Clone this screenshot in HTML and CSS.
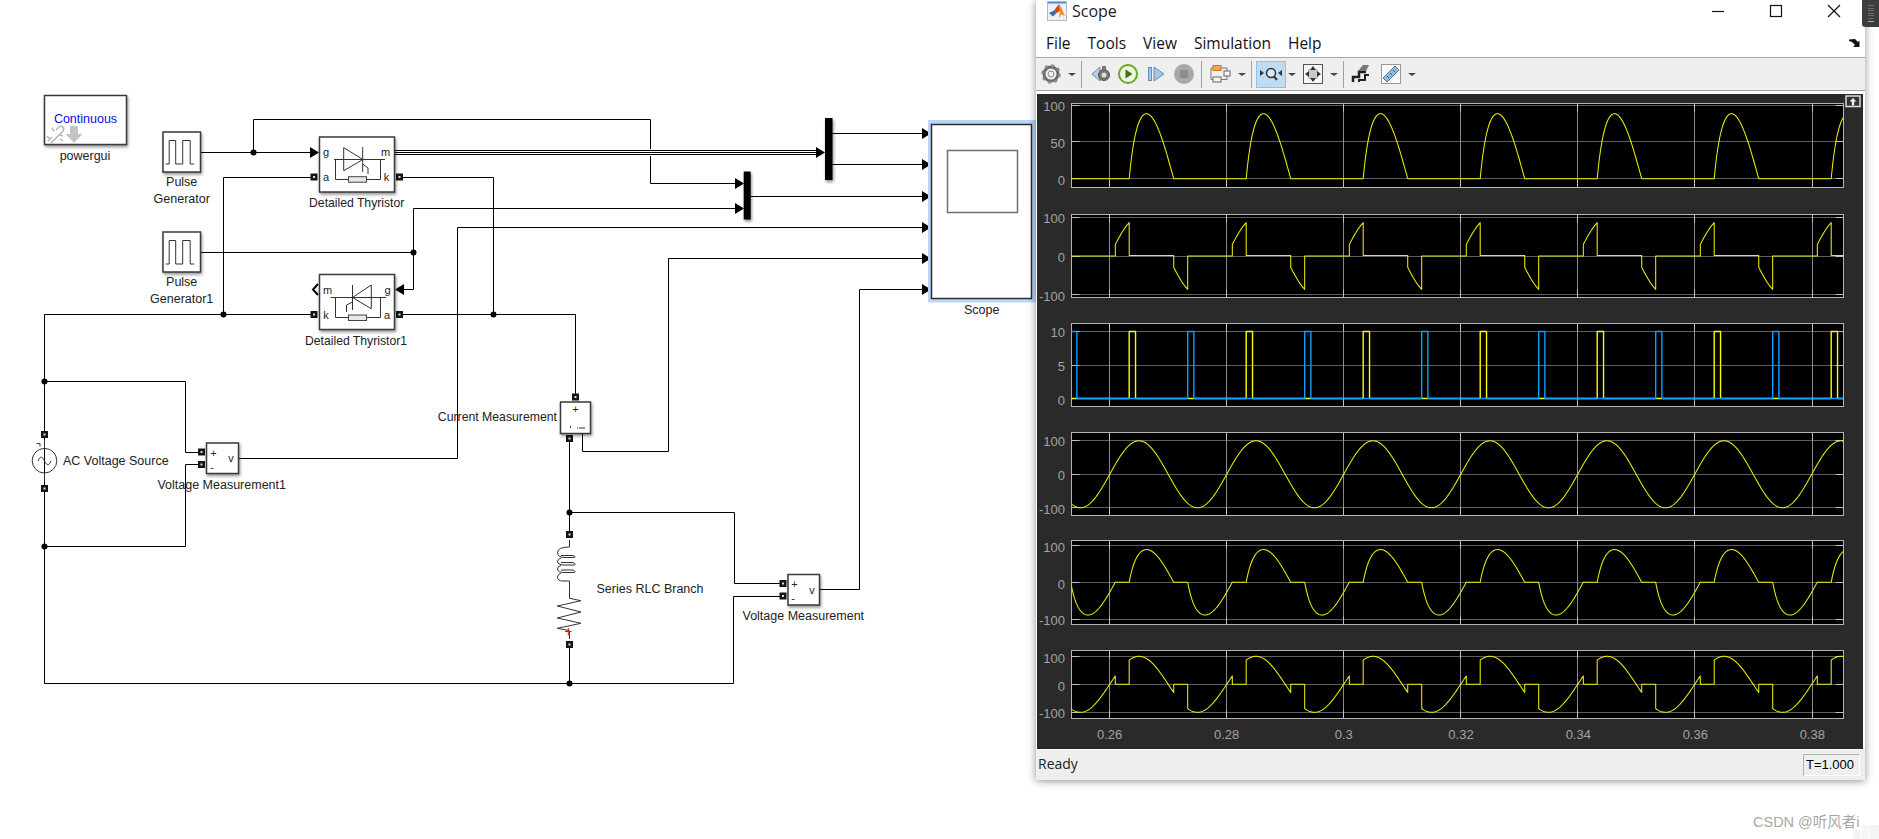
FILE: index.html
```html
<!DOCTYPE html>
<html lang="en">
<head>
<meta charset="utf-8">
<title>Scope</title>
<link rel="stylesheet" href="styles.css">
</head>
<body>
<div class="desktop">

<svg class="diagram" width="1879" height="839" viewBox="0 0 1879 839">
  <defs>
    <path id="arrow-r" d="M-9 -5.5L0 0L-9 5.5z"/>
    <path id="arrow-l" d="M9 -5.5L0 0L9 5.5z"/>
    <g id="port"><rect x="-3.5" y="-3.5" width="7" height="7" fill="#151515"/><rect x="-1" y="-1" width="2" height="2" fill="#ddd"/></g>
    <path id="pulse" d="M-16 16H-12.5V-7.5H-6V16H1V-7.5H8.5V16H12.5"/>
  </defs>

  <!-- wires -->
  <g class="wire">
    <path d="M201 152.5H311"/>
    <path d="M253.5 152.5V119.5H650.5V149M650.5 156V183.5H736"/>
    <path d="M311 177.5H223.5V314.5"/>
    <path d="M44.5 683.5V314.5H311"/>
    <path d="M403 177.5H493.5V314.5"/>
    <path d="M403 314.5H575.5V394"/>
    <path d="M201 252.5H413.5V208.5H736"/>
    <path d="M413.5 252.5V289.5H403"/>
    <path d="M239 458.5H457.5V227.5H923"/>
    <path d="M582.5 433V451.5H668.5V258.5H923"/>
    <path d="M819 589.5H859.5V289.5H923"/>
    <path d="M569.5 441V531"/>
    <path d="M569.5 647V683.5"/>
    <path d="M569.5 512.5H734.5V583.5H780"/>
    <path d="M44.5 683.5H733.5V596.5H780"/>
    <path d="M198 452.5H185.5V381.5H44.5"/>
    <path d="M198 464.5H185.5V546.5H44.5"/>
    <path d="M832 133.5H923"/>
    <path d="M832 164.5H923"/>
    <path d="M751 196.5H923"/>
    <path d="M394.5 150.5H817M394.5 152.5H817M394.5 154.5H817"/>
  </g>

  <!-- junctions -->
  <g class="dot">
    <circle cx="253.5" cy="152.5" r="3"/>
    <circle cx="413.5" cy="252.5" r="3"/>
    <circle cx="223.5" cy="314.5" r="3"/>
    <circle cx="493.5" cy="314.5" r="3"/>
    <circle cx="44.5" cy="381.5" r="3"/>
    <circle cx="44.5" cy="546.5" r="3"/>
    <circle cx="569.5" cy="512.5" r="3"/>
    <circle cx="569.5" cy="683.5" r="3"/>
  </g>

  <!-- arrow heads -->
  <g>
    <use href="#arrow-r" x="319" y="152.5"/>
    <use href="#arrow-l" x="395" y="289.5"/>
    <use href="#arrow-r" x="825" y="152.5"/>
    <use href="#arrow-r" x="744" y="183.5"/>
    <use href="#arrow-r" x="744" y="208.5"/>
    <use href="#arrow-r" x="931" y="133.5"/>
    <use href="#arrow-r" x="931" y="164.5"/>
    <use href="#arrow-r" x="931" y="196.5"/>
    <use href="#arrow-r" x="931" y="227.5"/>
    <use href="#arrow-r" x="931" y="258.5"/>
    <use href="#arrow-r" x="931" y="289.5"/>
  </g>

  <!-- ports -->
  <g>
    <use href="#port" x="314" y="177"/>
    <use href="#port" x="399.5" y="177"/>
    <use href="#port" x="314" y="314.5"/>
    <use href="#port" x="399.5" y="314.5"/>
    <use href="#port" x="44.5" y="434.5"/>
    <use href="#port" x="44.5" y="488.5"/>
    <use href="#port" x="201.5" y="452"/>
    <use href="#port" x="201.5" y="464.5"/>
    <use href="#port" x="575.5" y="397"/>
    <use href="#port" x="569.5" y="438.5"/>
    <use href="#port" x="569.5" y="534.5"/>
    <use href="#port" x="569.5" y="644.5"/>
    <use href="#port" x="783" y="583.5"/>
    <use href="#port" x="783" y="596"/>
  </g>

  <!-- powergui -->
  <rect class="block" x="44.5" y="95.5" width="82" height="49"/>
  <text class="lbl-blue" x="85.5" y="118.5">Continuous</text>
  <g class="link-icon">
    <path d="M48 141l4-4M51 143l12-12c2-3-1-6-4-4l-3 3M47 136l3 3M52 128l2 3M60 139l3 2M63 136l-3-1"/>
  </g>
  <path class="grey-arrow" d="M70 126h8v8h4.500l-8.500 9-8.500-9h4.500z"/>
  <text class="lbl" x="85" y="156">powergui</text>

  <!-- pulse generators -->
  <rect class="block" x="163" y="132" width="37.500" height="40"/>
  <use class="sym" href="#pulse" x="181.700" y="148"/>
  <text class="lbl" x="181.700" y="182">Pulse</text>
  <text class="lbl" x="181.700" y="199">Generator</text>
  <rect class="block" x="163" y="232" width="37.500" height="40"/>
  <use class="sym" href="#pulse" x="181.700" y="248"/>
  <text class="lbl" x="181.700" y="282">Pulse</text>
  <text class="lbl" x="181.700" y="299">Generator1</text>

  <!-- detailed thyristor -->
  <rect class="block" x="319.500" y="137" width="75" height="55"/>
  <path class="sym" d="M334 159.500H385M335.500 159.500V179.500H348.500M366.500 179.500H380.500V159.500M343.700 147.700V170.700L363 159.500zM362.700 147V172M362.700 164L368 168V174"/>
  <rect class="resistor" x="348.500" y="176.700" width="18" height="5.500"/>
  <text class="lbl-s" x="326" y="152">g</text>
  <text class="lbl-s" x="385.500" y="151.500">m</text>
  <text class="lbl-s" x="326" y="176.500">a</text>
  <text class="lbl-s" x="386.500" y="176.500">k</text>
  <text class="lbl lbl-d" x="356.700" y="203">Detailed Thyristor</text>

  <!-- detailed thyristor 1 -->
  <rect class="block" x="319.500" y="274.500" width="75" height="55"/>
  <path class="sym" d="M330.700 297.500H386M335.500 297.500V317.500H348.500M366.500 317.500H380.500V297.500M371.300 285V308.700L352.500 297.500zM352.500 285V310M352.500 302L346.500 305V312"/>
  <rect class="resistor" x="348.500" y="315" width="18" height="5.500"/>
  <path class="m-port" d="M318 284L313 289.500L318 295"/>
  <text class="lbl-s" x="327.500" y="289.500">m</text>
  <text class="lbl-s" x="387.500" y="290">g</text>
  <text class="lbl-s" x="326" y="314.500">k</text>
  <text class="lbl-s" x="387" y="314.500">a</text>
  <text class="lbl lbl-d" x="356" y="341">Detailed Thyristor1</text>

  <!-- AC source -->
  <path class="sym" d="M44.500 440V448.500M44.500 473V482"/>
  <circle class="sym" cx="44.500" cy="460.700" r="12.300"/>
  <path class="sym" d="M38 461c2-5 4-5 6.500 0s4.500 5 6.500 0"/>
  <path class="sym" d="M36.500 443.500h3.500v3"/>
  <text class="lbl-l" x="63" y="460.500">AC Voltage Source</text>

  <!-- voltage measurement 1 -->
  <rect class="block-sm" x="206.500" y="443" width="32" height="30.500"/>
  <text class="lbl-s" x="213.500" y="452.500">+</text>
  <text class="lbl-s" x="212" y="466.500">-</text>
  <text class="lbl-s" x="231" y="458">v</text>
  <text class="lbl" x="221.700" y="484.700">Voltage Measurement1</text>

  <!-- current measurement -->
  <rect class="block-sm" x="560.500" y="402" width="30" height="31.500"/>
  <text class="lbl-s" x="575.500" y="409">+</text>
  <path class="sym" d="M570.500 426v2M577 428h1M579 428h6"/>
  <text class="lbl-r" x="557" y="416.500">Current Measurement</text>

  <!-- series RLC -->
  <path class="sym" d="M569.500 540V547Q557.500 547 557.500 552.500Q557.500 557.500 565 557.500H573Q577.500 557.500 573 555.500H561M561 558Q557.500 559 557.500 561.500Q557.500 565 565 565H573Q577.500 565 573 562.500H561M561 565.500Q557.500 566.500 557.500 569Q557.500 572.500 565 572.500H573Q577.500 572.500 573 570H561M561 573Q557.500 574 557.500 577Q557.500 581 563 581H569.500V598.300L581 600.700L557.300 606L581 612L557.300 618L581 623.300L557.300 628.300L569.500 630.700V639"/>
  <path class="red" d="M565 631.500h6.500M568.300 628v7.500"/>
  <text class="lbl" x="650" y="588.500">Series RLC Branch</text>

  <!-- voltage measurement -->
  <rect class="block-sm" x="788" y="574.500" width="31.500" height="30.500"/>
  <text class="lbl-s" x="794.500" y="583.500">+</text>
  <text class="lbl-s" x="793" y="597.500">-</text>
  <text class="lbl-s" x="812" y="589.500">v</text>
  <text class="lbl" x="803.300" y="615.500">Voltage Measurement</text>

  <!-- mux bars -->
  <rect class="bar" x="825" y="118" width="7.500" height="62"/>
  <rect class="bar" x="743.700" y="171.500" width="7" height="48"/>

  <!-- scope block -->
  <rect class="selection" x="930" y="122" width="104" height="178.500"/>
  <rect class="scope-block" x="931.500" y="124.500" width="100" height="174"/>
  <rect class="scope-screen" x="947.500" y="150.500" width="70" height="62"/>
  <text class="lbl" x="981.700" y="309.500">Scope</text>

  <!-- faint corner artefacts -->
  <rect class="faint" x="1853" y="830" width="8" height="9"/>
  <rect class="faint" x="1862" y="825" width="6" height="14"/>
  <rect class="faint" x="1869" y="825" width="10" height="14"/>
</svg>

<section class="scope-window">
  <header class="titlebar">
    <svg class="app-icon" width="20" height="20" viewBox="0 0 20 20">
      <rect x=".5" y=".5" width="19" height="19" fill="#eef0f3" stroke="#b5b9bd"/>
      <rect x="1" y="1" width="18" height="1.500" fill="#3f8fdc"/>
      <path d="M2 12L7 9.500L9.500 12L6 15.500z" fill="#2f6cae"/>
      <path d="M7 9.500L12 3L13 10L9.500 12z" fill="#c9471c"/>
      <path d="M12 3C14 5 16 11 18 15L14.500 13.500L12 17L13 10z" fill="#ef8a28"/>
    </svg>
    <span class="title-text">Scope</span>
    <div class="window-controls">
      <span class="wc"><svg width="14" height="14" viewBox="0 0 14 14"><path class="wc-line" d="M1 7.500H13"/></svg></span>
      <span class="wc"><svg width="14" height="14" viewBox="0 0 14 14"><rect class="wc-line" x="1.500" y="1.500" width="11" height="11"/></svg></span>
      <span class="wc"><svg width="14" height="14" viewBox="0 0 14 14"><path class="wc-line" d="M1 1L13 13M13 1L1 13"/></svg></span>
    </div>
  </header>

  <nav class="menubar">
    <span class="menu-item">File</span>
    <span class="menu-item">Tools</span>
    <span class="menu-item">View</span>
    <span class="menu-item">Simulation</span>
    <span class="menu-item">Help</span>
    <svg class="undock-menu" width="12" height="10" viewBox="0 0 12 10"><path d="M1 1.500L7 1L10 4L11.500 2.500V9H5L7 7L4 4L1 3z" fill="#111"/></svg>
  </nav>

  <div class="toolbar">
    <svg class="ti m5" width="20" height="20" viewBox="0 0 20 20">
      <circle cx="10" cy="10" r="7" fill="none" stroke="#6b6b6b" stroke-width="3"/>
      <circle cx="10" cy="10" r="8.500" fill="none" stroke="#8a8a8a" stroke-width="2.500" stroke-dasharray="3 3.670"/>
      <circle cx="10" cy="10" r="3" fill="#efefef" stroke="#8a8a8a"/>
    </svg>
    <span class="dd m7"></span>
    <span class="sep m5"></span>
    <svg class="ti m9" width="20" height="20" viewBox="0 0 20 20">
      <path d="M1 10L9 3V17z" fill="#b9cfe3" stroke="#6c8cab"/>
      <circle cx="13" cy="11" r="5.500" fill="#777" stroke="#555"/>
      <circle cx="13" cy="11" r="2.500" fill="#ddd"/>
      <rect x="11" y="2" width="4" height="3.500" fill="#777"/>
    </svg>
    <svg class="ti m7" width="20" height="20" viewBox="0 0 20 20">
      <circle cx="10" cy="10" r="9" fill="#eef5dc" stroke="#6aa82e" stroke-width="2"/>
      <path d="M7.500 5.500L14.500 10L7.500 14.500z" fill="#3f6f1c"/>
    </svg>
    <svg class="ti m8" width="20" height="20" viewBox="0 0 20 20">
      <rect x="2.500" y="3.500" width="3" height="13" fill="#a9c6e6" stroke="#5f8ebd"/>
      <path d="M8 3L18 10L8 17z" fill="#a9c6e6" stroke="#5f8ebd"/>
    </svg>
    <svg class="ti m8" width="20" height="20" viewBox="0 0 20 20">
      <circle cx="10" cy="10" r="10" fill="#a8a8a8"/>
      <rect x="6" y="6" width="8" height="8" fill="#8c8c8c"/>
    </svg>
    <span class="sep m7"></span>
    <svg class="ti m8" width="22" height="20" viewBox="0 0 22 20">
      <rect x="3" y="1.500" width="8" height="5" fill="#f2a94a" stroke="#c77a1d"/>
      <rect x="3" y="13" width="8" height="5" fill="#f5f5f5" stroke="#666"/>
      <rect x="14" y="7" width="6" height="5" fill="#f5f5f5" stroke="#666"/>
      <path d="M11 4H17V7M11 15.500H17V12M1 4H3M1 4V15.500H3" fill="none" stroke="#777"/>
    </svg>
    <span class="dd m6"></span>
    <span class="sep m5"></span>
    <span class="tb-active m4">
      <svg width="24" height="20" viewBox="0 0 24 20">
        <circle cx="12" cy="9" r="4.500" fill="#dbe9f5" stroke="#333" stroke-width="1.500"/>
        <path d="M15 12.500L18 16" stroke="#333" stroke-width="2"/>
        <path d="M5 9L1 6V12zM19 9L23 6V12z" fill="#333"/>
      </svg>
    </span>
    <span class="dd m2"></span>
    <svg class="ti m7" width="20" height="20" viewBox="0 0 20 20">
      <rect x=".5" y=".5" width="19" height="19" fill="#f8f8f8" stroke="#555"/>
      <rect x="5" y="5" width="10" height="10" fill="#c8c8c8"/>
      <path d="M10 2L13 6H7zM10 18L13 14H7zM2 10L6 7V13zM18 10L14 7V13z" fill="#333"/>
    </svg>
    <span class="dd m7"></span>
    <span class="sep m5"></span>
    <svg class="ti m7" width="20" height="20" viewBox="0 0 20 20">
      <path d="M2 18V13H8V8H15" fill="none" stroke="#222" stroke-width="2.500"/>
      <path d="M8 18V16H14V11H18" fill="none" stroke="#222" stroke-width="2"/>
      <path d="M7 7L12 1H18L15 7z" fill="#777"/>
    </svg>
    <svg class="ti m10" width="20" height="20" viewBox="0 0 20 20">
      <rect x=".5" y=".5" width="19" height="19" fill="#fbfbfb" stroke="#999"/>
      <path d="M2 14L14 2L18 6L6 18z" fill="#8dbbe0" stroke="#4b7da6"/>
      <path d="M6 12l2 2M9 9l2 2M12 6l2 2" stroke="#35607f"/>
    </svg>
    <span class="dd m7"></span>
  </div>

  <main class="plot-panel">
    <svg id="plots" class="plots" width="826" height="655" viewBox="1037 94 826 655">
      <g class="tk">
        <text x="1065" y="106">100</text><text x="1065" y="143">50</text><text x="1065" y="180">0</text>
        <text x="1065" y="218">100</text><text x="1065" y="257">0</text><text x="1065" y="296.500">-100</text>
        <text x="1065" y="332.500">10</text><text x="1065" y="366.500">5</text><text x="1065" y="400.500">0</text>
        <text x="1065" y="441.500">100</text><text x="1065" y="475.500">0</text><text x="1065" y="509.500">-100</text>
        <text x="1065" y="547.500">100</text><text x="1065" y="584.500">0</text><text x="1065" y="620">-100</text>
        <text x="1065" y="658.500">100</text><text x="1065" y="686.500">0</text><text x="1065" y="713.500">-100</text>
      </g>
      <g class="tx">
        <text x="1109.700" y="734.500">0.26</text>
        <text x="1226.700" y="734.500">0.28</text>
        <text x="1343.700" y="734.500">0.3</text>
        <text x="1461" y="734.500">0.32</text>
        <text x="1578.300" y="734.500">0.34</text>
        <text x="1695.300" y="734.500">0.36</text>
        <text x="1812.300" y="734.500">0.38</text>
      </g>
      <rect class="undock" x="1846" y="96" width="14" height="10.500"/>
      <path class="undock-mark" d="M1853 98L1856.500 101.500H1854.200V105.500H1851.800V101.500H1849.500z"/>
    </svg>
  </main>

  <footer class="statusbar">
    <span class="status-text">Ready</span>
    <span class="status-time">T=1.000</span>
  </footer>
</section>

<div class="gadget" aria-hidden="true">
  <span class="g-line"></span><span class="g-line"></span><span class="g-line"></span><span class="g-line"></span><span class="g-line"></span><span class="g-line"></span>
  <span class="g-line g-on"></span>
</div>

<div class="watermark">CSDN @听风者i</div>
</div>
<script src="plots.js"></script>
</body>
</html>
```

FILE: styles.css
```css
html, body {
  margin: 0;
  padding: 0;
  background: #fff;
}
.desktop {
  position: relative;
  width: 1879px;
  height: 839px;
  overflow: hidden;
  background: #fff;
}
.diagram {
  position: absolute;
  left: 0;
  top: 0;
}
.diagram text {
  font-family: "Liberation Sans", Arial, sans-serif;
  dominant-baseline: central;
}
.wire path {
  fill: none;
  stroke: #000;
  stroke-width: 1;
}
.dot circle { fill: #000; }
.block, .block-sm {
  fill: #fff;
  stroke: #3a3a3a;
  stroke-width: 1.5;
  filter: drop-shadow(1.5px 2px 1.5px rgba(0,0,0,.4));
}
.sym {
  fill: none;
  stroke: #333;
  stroke-width: 1;
}
.resistor {
  fill: #e8e8e8;
  stroke: #444;
  stroke-width: 1;
}
.m-port {
  fill: none;
  stroke: #000;
  stroke-width: 2;
}
.link-icon path {
  fill: none;
  stroke: #b5b5b5;
  stroke-width: 1.500;
}
.grey-arrow { fill: #c4c4c4; }
.red {
  fill: none;
  stroke: #ee1111;
  stroke-width: 1;
}
.lbl, .lbl-s, .lbl-l, .lbl-r, .lbl-blue {
  font-size: 12.500px;
  fill: #222;
  text-anchor: middle;
}
.lbl-d { font-size: 12.200px; }
.lbl-s { font-size: 11px; }
.lbl-l { text-anchor: start; }
.lbl-r { text-anchor: end; font-size: 12.250px; }
.lbl-blue { fill: #0a0ae6; }
.bar {
  fill: #000;
  filter: drop-shadow(1.5px 2px 1.5px rgba(0,0,0,.45));
}
.selection {
  fill: none;
  stroke: #bcd7f6;
  stroke-width: 4;
}
.scope-block {
  fill: #fff;
  stroke: #2c2c2c;
  stroke-width: 1.5;
}
.scope-screen {
  fill: #fff;
  stroke: #707070;
  stroke-width: 1.5;
}
.faint { fill: #f5f5f5; }

/* scope window */
.scope-window {
  position: absolute;
  left: 1036px;
  top: 0;
  width: 829px;
  height: 780px;
  display: flex;
  flex-direction: column;
  background: #fff;
  box-shadow: 0 1px 8px rgba(0,0,0,.45);
  font-family: "Open Sans", "Noto Sans", sans-serif;
  color: #111;
}
.titlebar {
  height: 22px;
  flex: none;
  display: flex;
  align-items: center;
  padding-left: 11px;
}
.app-icon { flex: none; }
.title-text {
  margin-left: 5px;
  font-size: 16px;
  line-height: 22px;
  color: #222;
}
.window-controls {
  margin-left: auto;
  margin-right: 2px;
  display: flex;
}
.wc {
  width: 58px;
  height: 22px;
  display: flex;
  align-items: center;
  justify-content: center;
}
.wc-line {
  fill: none;
  stroke: #111;
  stroke-width: 1.200;
}
.menubar {
  height: 36px;
  flex: none;
  box-sizing: border-box;
  padding: 6px 5px 0 10px;
  display: flex;
  align-items: center;
  gap: 17px;
  border-bottom: 1px solid #a6a6a6;
  font-size: 15.500px;
}
.menu-item { line-height: 20px; }
.undock-menu { margin-left: auto; }
.toolbar {
  height: 33px;
  flex: none;
  box-sizing: border-box;
  display: flex;
  align-items: center;
  background: #efefef;
  border-bottom: 1px solid #a6a6a6;
}
.ti { flex: none; }
.dd {
  flex: none;
  width: 0;
  height: 0;
  border-left: 4px solid transparent;
  border-right: 4px solid transparent;
  border-top: 3px solid #444;
}
.sep {
  flex: none;
  width: 1px;
  height: 27px;
  background: #a0a0a0;
}
.tb-active {
  flex: none;
  width: 30px;
  height: 27px;
  box-sizing: border-box;
  display: flex;
  align-items: center;
  justify-content: center;
  background: #bfdcf5;
  border: 1px solid #8cc3ee;
}
.m2 { margin-left: 2px; }
.m4 { margin-left: 4px; }
.m5 { margin-left: 5px; }
.m6 { margin-left: 6px; }
.m7 { margin-left: 7px; }
.m8 { margin-left: 8px; }
.m9 { margin-left: 9px; }
.m10 { margin-left: 10px; }
.plot-panel {
  height: 655px;
  flex: none;
  margin: 3px 2px 1px 1px;
  background: #2a2a2a;
}
.plots {
  display: block;
}
.plots text {
  font-family: "Liberation Sans", Arial, sans-serif;
  font-size: 13px;
  fill: #a3a3a3;
  dominant-baseline: central;
}
.tk text { text-anchor: end; }
.tx text { text-anchor: middle; }
.ax-bg { fill: #000; }
.ax-frame { fill: none; stroke: #b4b4b4; stroke-width: 1; }
.ax-hgrid { stroke: #5e5e5e; stroke-width: 1; }
.ax-vgrid { stroke: #8a8a8a; stroke-width: 1; }
.ax-tick { stroke: #c0c0c0; stroke-width: 1; }
.trace { fill: none; stroke-width: 1.050; stroke-linejoin: round; }
.trace-y { stroke: #eeee00; }
.trace-p { stroke-width: 1.400; stroke: #ffff00; }
.trace-b { stroke: #0aa0ff; stroke-width: 1.400; }
.undock { fill: #333; stroke: #dcdcdc; stroke-width: 1.500; }
.undock-mark { fill: #eee; }
.statusbar {
  flex: 1;
  display: flex;
  align-items: center;
  justify-content: space-between;
  padding: 0 5px 0 2px;
  background: #eee;
  font-family: "Liberation Sans", Arial, sans-serif;
  font-size: 13px;
}
.status-text {
  font-family: "Open Sans", "Noto Sans", sans-serif;
  font-size: 14px;
  line-height: 18px;
  margin-bottom: 2px;
  color: #222;
}
.status-time {
  box-sizing: border-box;
  width: 57px;
  height: 22px;
  padding-left: 2px;
  line-height: 20px;
  color: #000;
  border-style: solid;
  border-width: 1px;
  border-color: #b0b0b0 #fff #fff #b0b0b0;
}

/* corner gadget */
.gadget {
  position: absolute;
  left: 1862px;
  top: 0;
  width: 17px;
  height: 27px;
  box-sizing: border-box;
  padding: 5px 5px 0 6px;
  display: flex;
  flex-direction: column;
  gap: 1.500px;
  background: #3b3e3b;
  border-bottom-left-radius: 3px;
}
.g-line {
  display: block;
  height: 1px;
  background: #6d6d6d;
}
.g-on { background: #8fd13f; margin-top: 1px; }

.watermark {
  position: absolute;
  left: 1753px;
  top: 812px;
  font-family: "Liberation Sans", "Noto Sans CJK SC", sans-serif;
  font-size: 14.500px;
  line-height: 20px;
  color: #a8a8a8;
  white-space: nowrap;
}
```

FILE: plots.js
```js
// Draws the six scope axes. Traces are computed from the circuit's waveforms:
// a 50 Hz, 100 V source with two antiparallel thyristors fired at 60 degrees into an RL load.
(function () {
  var NS = 'http://www.w3.org/2000/svg';
  var svg = document.getElementById('plots');
  var LEFT = 1071.5, RIGHT = 1843.5;
  var X0 = 1109.7, PERIOD = 117;
  var RAD = Math.PI / 180;

  function sin100(t) { return 100 * Math.sin(t * RAD); }
  function zero() { return 0; }
  function k(v) { return function () { return v; }; }
  function cur(t) {
    var phi = 17, alpha = 60;
    return 92 * (Math.sin((t - phi) * RAD) -
      Math.sin((alpha - phi) * RAD) * Math.exp(-(t - alpha) * RAD / Math.tan(phi * RAD)));
  }
  function curNeg(t) { return -cur(t - 180); }

  var axes = [
    { top: 103.5, bottom: 187.5, y0: 178.7, s: 0.735, ticks: [100, 50, 0],
      traces: [{ c: 'trace-y', segs: [[0, 60, zero], [60, 197, cur], [197, 360, zero]] }] },
    { top: 214.5, bottom: 297.5, y0: 256, s: 0.385, ticks: [100, 0, -100],
      traces: [{ c: 'trace-y', segs: [[0, 17.3, zero], [17.3, 60, sin100], [60, 197, k(1.5)], [197, 240, sin100], [240, 360, zero]] }] },
    { top: 323.5, bottom: 406.5, y0: 398.5, s: 6.7, ticks: [10, 5, 0],
      traces: [
        { c: 'trace-y trace-p', segs: [[0, 60, zero], [60, 79.5, k(10)], [79.5, 360, zero]] },
        { c: 'trace-b', segs: [[0, 240, zero], [240, 259, k(10)], [259, 360, zero]] }
      ] },
    { top: 432.5, bottom: 515.5, y0: 474.3, s: 0.335, ticks: [100, 0, -100],
      traces: [{ c: 'trace-y', segs: [[0, 360, sin100]] }] },
    { top: 540.5, bottom: 624.5, y0: 582.3, s: 0.37, ticks: [100, 0, -100],
      traces: [{ c: 'trace-y', segs: [[17.3, 60, zero], [60, 197, cur], [197, 240, zero], [240, 377.3, curNeg]] }] },
    { top: 650.5, bottom: 718.5, y0: 684.3, s: 0.28, ticks: [100, 0, -100],
      traces: [{ c: 'trace-y', segs: [[17.3, 60, zero], [60, 197, sin100], [197, 240, zero], [240, 377.3, sin100]] }] }
  ];

  var gridX = [];
  for (var g = 0; g < 7; g++) gridX.push(Math.floor(X0 + 117.05 * g) + 0.5);

  function el(parent, name, attrs) {
    var e = document.createElementNS(NS, name);
    for (var a in attrs) e.setAttribute(a, attrs[a]);
    parent.appendChild(e);
    return e;
  }
  function line(parent, cls, x1, y1, x2, y2) {
    return el(parent, 'line', { 'class': cls, x1: x1, y1: y1, x2: x2, y2: y2 });
  }

  axes.forEach(function (ax) {
    var h = ax.bottom - ax.top, w = RIGHT - LEFT;
    el(svg, 'rect', { 'class': 'ax-bg', x: LEFT, y: ax.top, width: w, height: h });

    ax.ticks.forEach(function (v) {
      var y = Math.floor(ax.y0 - v * ax.s) + 0.5;
      line(svg, 'ax-hgrid', LEFT, y, RIGHT, y);
    });
    gridX.forEach(function (x) { line(svg, 'ax-vgrid', x, ax.top, x, ax.bottom); });

    ax.ticks.forEach(function (v) {
      var y = Math.floor(ax.y0 - v * ax.s) + 0.5;
      line(svg, 'ax-tick', LEFT, y, LEFT + 8, y);
      line(svg, 'ax-tick', RIGHT - 8, y, RIGHT, y);
    });
    gridX.forEach(function (x) {
      line(svg, 'ax-tick', x, ax.top, x, ax.top + 8);
      line(svg, 'ax-tick', x, ax.bottom - 8, x, ax.bottom);
    });
    el(svg, 'rect', { 'class': 'ax-frame', x: LEFT, y: ax.top, width: w, height: h });

    var clip = el(svg, 'svg', {
      x: LEFT, y: ax.top, width: w, height: h,
      viewBox: LEFT + ' ' + ax.top + ' ' + w + ' ' + h
    });
    ax.traces.forEach(function (tr) {
      var pts = [];
      for (var p = -1; p <= 7; p++) {
        tr.segs.forEach(function (s) {
          var n = Math.max(1, Math.ceil((s[1] - s[0]) / 2));
          for (var i = 0; i <= n; i++) {
            var t = s[0] + (s[1] - s[0]) * i / n;
            var x = X0 + (t + 360 * p) / 360 * PERIOD;
            if (x < LEFT - 5 || x > RIGHT + 5) continue;
            pts.push(x.toFixed(2) + ',' + (ax.y0 - s[2](t) * ax.s).toFixed(2));
          }
        });
      }
      el(clip, 'polyline', { 'class': 'trace ' + tr.c, points: pts.join(' ') });
    });
  });
})();
```
